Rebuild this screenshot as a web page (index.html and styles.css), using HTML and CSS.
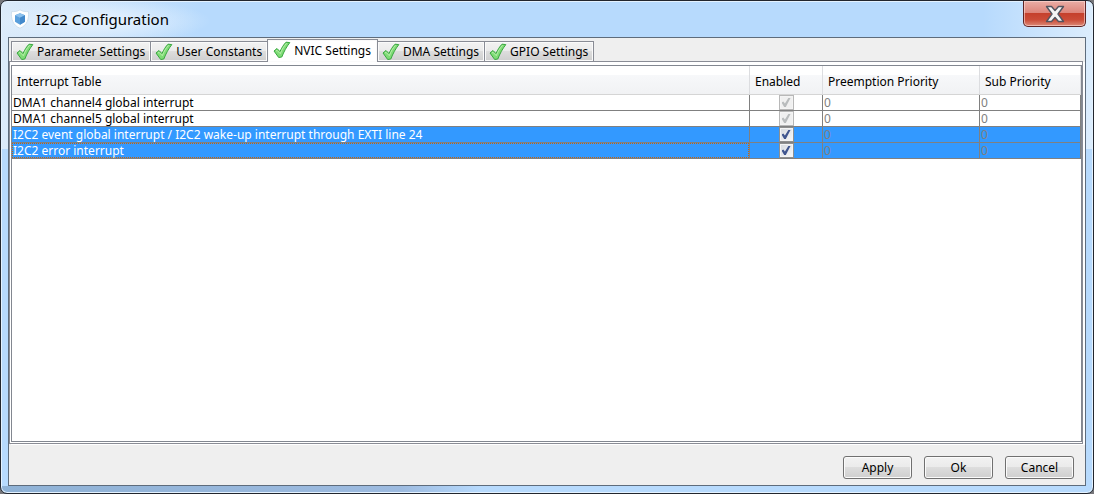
FILE: index.html
```html
<!DOCTYPE html>
<html lang="en">
<head>
    <meta charset="UTF-8">
    <meta name="viewport" content="width=device-width, initial-scale=1.0">
    <title>I2C2 Configuration</title>
    <link rel="stylesheet" href="styles.css">
</head>
<body>
    <svg class="defs" aria-hidden="true">
        <symbol id="tick" viewBox="0 0 18 18">
            <path d="M1 10 4 7.500 7 10.600 C8.800 6.600 10.700 3.500 13 1.200 L16.800 1.600 C13.500 5.800 11 10.500 8.800 16 L5.700 16.500Z" fill="#7fdc76" stroke="#37a73e" stroke-width="1" stroke-linejoin="round"/>
            <path d="M3 10 4 9.300 7.300 12.700 C9 8.200 11 5 13.600 2.400" fill="none" stroke="#b9f0ac" stroke-width="1"/>
        </symbol>
    </svg>

    <div class="window">
        <header class="titlebar">
            <svg class="app-icon" viewBox="0 0 20 20" aria-hidden="true">
                <path d="M10 .8 C12.500 2.400 15.500 2.700 18.500 2.600 C19 10 17.500 16 10 19.300 C2.500 16 1 10 1.500 2.600 C4.500 2.700 7.500 2.400 10 .8Z" fill="#fff" stroke="#cfe0ee"/>
                <path d="M10 4.200 15 6.300V12.800L10 15.800 5 12.800V6.300Z" fill="#5a9fdc"/>
                <path d="M10 4.200 15 6.300 10 8.700 5 6.300Z" fill="#8cc0ec"/>
                <path d="M10 8.700 15 6.300V12.800L10 15.800Z" fill="#4389cb"/>
            </svg>
            <h1>I2C2 Configuration</h1>
            <button type="button" class="close" aria-label="Close">
                <svg viewBox="0 0 20 18" aria-hidden="true">
                    <path d="M1.500 1.500H6.500L10 5.500 13.500 1.500H18.500L13 9 18.500 16.500H13.500L10 12.500 6.500 16.500H1.500L7 9Z" fill="#f4f4f4" stroke="#53545f" stroke-width="1.400" stroke-linejoin="round"/>
                </svg>
            </button>
        </header>

        <main class="content">
            <div class="tabs" role="tablist">
                <button type="button" class="tab" role="tab"><svg><use href="#tick"/></svg>Parameter Settings</button>
                <button type="button" class="tab" role="tab"><svg><use href="#tick"/></svg>User Constants</button>
                <button type="button" class="tab active" role="tab" aria-selected="true"><svg><use href="#tick"/></svg>NVIC Settings</button>
                <button type="button" class="tab" role="tab"><svg><use href="#tick"/></svg>DMA Settings</button>
                <button type="button" class="tab" role="tab"><svg><use href="#tick"/></svg>GPIO Settings</button>
            </div>

            <section class="panel" role="tabpanel">
                <div class="table-box">
                    <table>
                        <colgroup>
                            <col>
                            <col class="col-enabled">
                            <col class="col-preemption">
                            <col class="col-sub">
                        </colgroup>
                        <thead>
                            <tr>
                                <th>Interrupt Table</th>
                                <th>Enabled</th>
                                <th>Preemption Priority</th>
                                <th>Sub Priority</th>
                            </tr>
                        </thead>
                        <tbody>
                            <tr>
                                <td id="irq1">DMA1 channel4 global interrupt</td>
                                <td class="check"><input type="checkbox" aria-labelledby="irq1" checked disabled></td>
                                <td class="num">0</td>
                                <td class="num">0</td>
                            </tr>
                            <tr>
                                <td id="irq2">DMA1 channel5 global interrupt</td>
                                <td class="check"><input type="checkbox" aria-labelledby="irq2" checked disabled></td>
                                <td class="num">0</td>
                                <td class="num">0</td>
                            </tr>
                            <tr class="selected">
                                <td id="irq3">I2C2 event global interrupt / I2C2 wake-up interrupt through EXTI line 24</td>
                                <td class="check"><input type="checkbox" aria-labelledby="irq3" checked></td>
                                <td class="num">0</td>
                                <td class="num">0</td>
                            </tr>
                            <tr class="selected">
                                <td id="irq4" class="focused"><div>I2C2 error interrupt</div></td>
                                <td class="check"><input type="checkbox" aria-labelledby="irq4" checked></td>
                                <td class="num">0</td>
                                <td class="num">0</td>
                            </tr>
                        </tbody>
                    </table>
                </div>
            </section>

            <footer class="actions">
                <button type="button">Apply</button>
                <button type="button">Ok</button>
                <button type="button">Cancel</button>
            </footer>
        </main>
    </div>
</body>
</html>
```
FILE: styles.css
```css
* {
    box-sizing: border-box;
}
body {
    margin: 0;
    background: #77777b;
    font-family: "Noto Sans", Tahoma, sans-serif;
    font-size: 12px;
    color: #000;
}
button {
    font: inherit;
    color: inherit;
}
.defs {
    display: none;
}

/* window frame */
.window {
    display: flex;
    flex-direction: column;
    height: 100vh;
    padding: 0 7px 7px;
    border: 1px solid #22262e;
    border-radius: 7px;
    box-shadow: inset 0 0 0 1px #e4f2ff;
    background:
        radial-gradient(ellipse 110px 22px at 100px 20px, rgba(235, 245, 255, 0.9), transparent),
        linear-gradient(90deg, #8fb2d6, #9dbbe0 400px, #b7dafd 480px, transparent 480px) left bottom / 100% 7px no-repeat,
        linear-gradient(270deg, #dcedfd, rgba(220, 237, 253, 0) 110px) top / 100% 148px no-repeat,
        linear-gradient(90deg, #dcebfa, rgba(220, 235, 250, 0) 200px) top / 100% 148px no-repeat,
        #b7dafd;
}
.titlebar {
    display: flex;
    align-items: center;
    height: 36px;
    flex: none;
    padding-left: 2px;
}
.app-icon {
    width: 20px;
    height: 20px;
}
.titlebar h1 {
    margin: 0 auto 0 6px;
    font-size: 15px;
    font-weight: 400;
}
.close {
    display: flex;
    align-items: center;
    justify-content: center;
    align-self: flex-start;
    width: 63px;
    height: 26px;
    padding: 0;
    border: 1px solid #5e2424;
    border-top: 0;
    border-radius: 0 0 5px 5px;
    background: linear-gradient(#eaaea6, #dd8479 48%, #c5402c 50%, #cb4c38 75%, #dc8a78);
    box-shadow: inset 0 0 0 1px rgba(255, 220, 215, 0.6);
}
.close svg {
    width: 20px;
    height: 18px;
}

/* client area */
.content {
    display: flex;
    flex-direction: column;
    flex: 1;
    min-height: 0;
    border: 1px solid #5e6c7c;
    background: #efefef;
}

.tabs {
    display: flex;
    align-items: flex-end;
    height: 24px;
    flex: none;
    padding: 1px 0 0 2px;
    margin-bottom: -1px;
}
.tab {
    display: flex;
    align-items: center;
    gap: 3px;
    height: 21px;
    padding: 0 5px 0 4px;
    margin-right: -1px;
    border: 1px solid #898c95;
    background: linear-gradient(#f2f2f2, #ebebeb 48%, #dddddd 50%, #cfcfcf);
    box-shadow: inset 0 0 0 1px #fafafa;
    white-space: nowrap;
}
.tab svg {
    width: 18px;
    height: 18px;
}
.tab.active {
    height: 23px;
    padding: 0 6px 2px 5px;
    border-bottom: 0;
    background: #fff;
    z-index: 1;
}

.panel {
    display: flex;
    flex: 1;
    min-height: 0;
    margin-right: 2px;
    padding: 3px 0 1px 1px;
    border: 1px solid #898c95;
    background: #fff;
    box-shadow: 2px 1px 0 #fff;
}
.table-box {
    flex: 1;
    border: 1px solid #828790;
    overflow: hidden;
}

table {
    width: 100%;
    table-layout: fixed;
    border-collapse: separate;
    border-spacing: 0;
}
.col-enabled {
    width: 73px;
}
.col-preemption {
    width: 157px;
}
.col-sub {
    width: 101px;
}
th {
    height: 29px;
    padding: 2px 0 0 5px;
    border-right: 1px solid #dcdde0;
    border-bottom: 1px solid #d5d5d5;
    background: linear-gradient(#fff 9px, #f7f8fa 9px, #f1f2f4);
    font-weight: 400;
    text-align: left;
    white-space: nowrap;
}
td {
    height: 16px;
    padding: 0 1px;
    border-right: 1px solid #808080;
    border-bottom: 1px solid #808080;
    line-height: 15px;
    white-space: nowrap;
    overflow: hidden;
}
.num {
    color: #808080;
}
.selected {
    background: #3399ff;
    color: #fff;
}
.focused {
    padding: 0;
}
.focused div {
    border: 1px dotted #c8640a;
    line-height: 13px;
}

.check {
    padding: 0;
    text-align: center;
}
.check input {
    appearance: none;
    display: block;
    width: 15px;
    height: 15px;
    margin: 0 auto;
    border: 1px solid #8e8f8f;
    background: linear-gradient(135deg, #d5d9df, #f8f8f8);
    box-shadow: inset 0 0 0 1px #f4f4f4;
}
.check input::before {
    content: "";
    display: block;
    width: 9px;
    height: 9px;
    margin: 2px;
    background: #40568f;
    clip-path: polygon(0 50%, 20% 40%, 38% 62%, 76% 0, 100% 0, 48% 100%, 30% 100%);
}
.check input:disabled {
    border-color: #b8b8b8;
    background: #f0f0f0;
}
.check input:disabled::before {
    background: #b9bcbd;
}

.actions {
    display: flex;
    justify-content: flex-end;
    gap: 12px;
    padding: 12px 11px 6px;
}
.actions button {
    width: 69px;
    height: 23px;
    padding: 0;
    border: 1px solid #707070;
    border-radius: 3px;
    background: linear-gradient(#f2f2f2, #ebebeb 48%, #dddddd 50%, #cfcfcf);
    box-shadow: inset 0 0 0 1px #fbfbfb;
}
```
